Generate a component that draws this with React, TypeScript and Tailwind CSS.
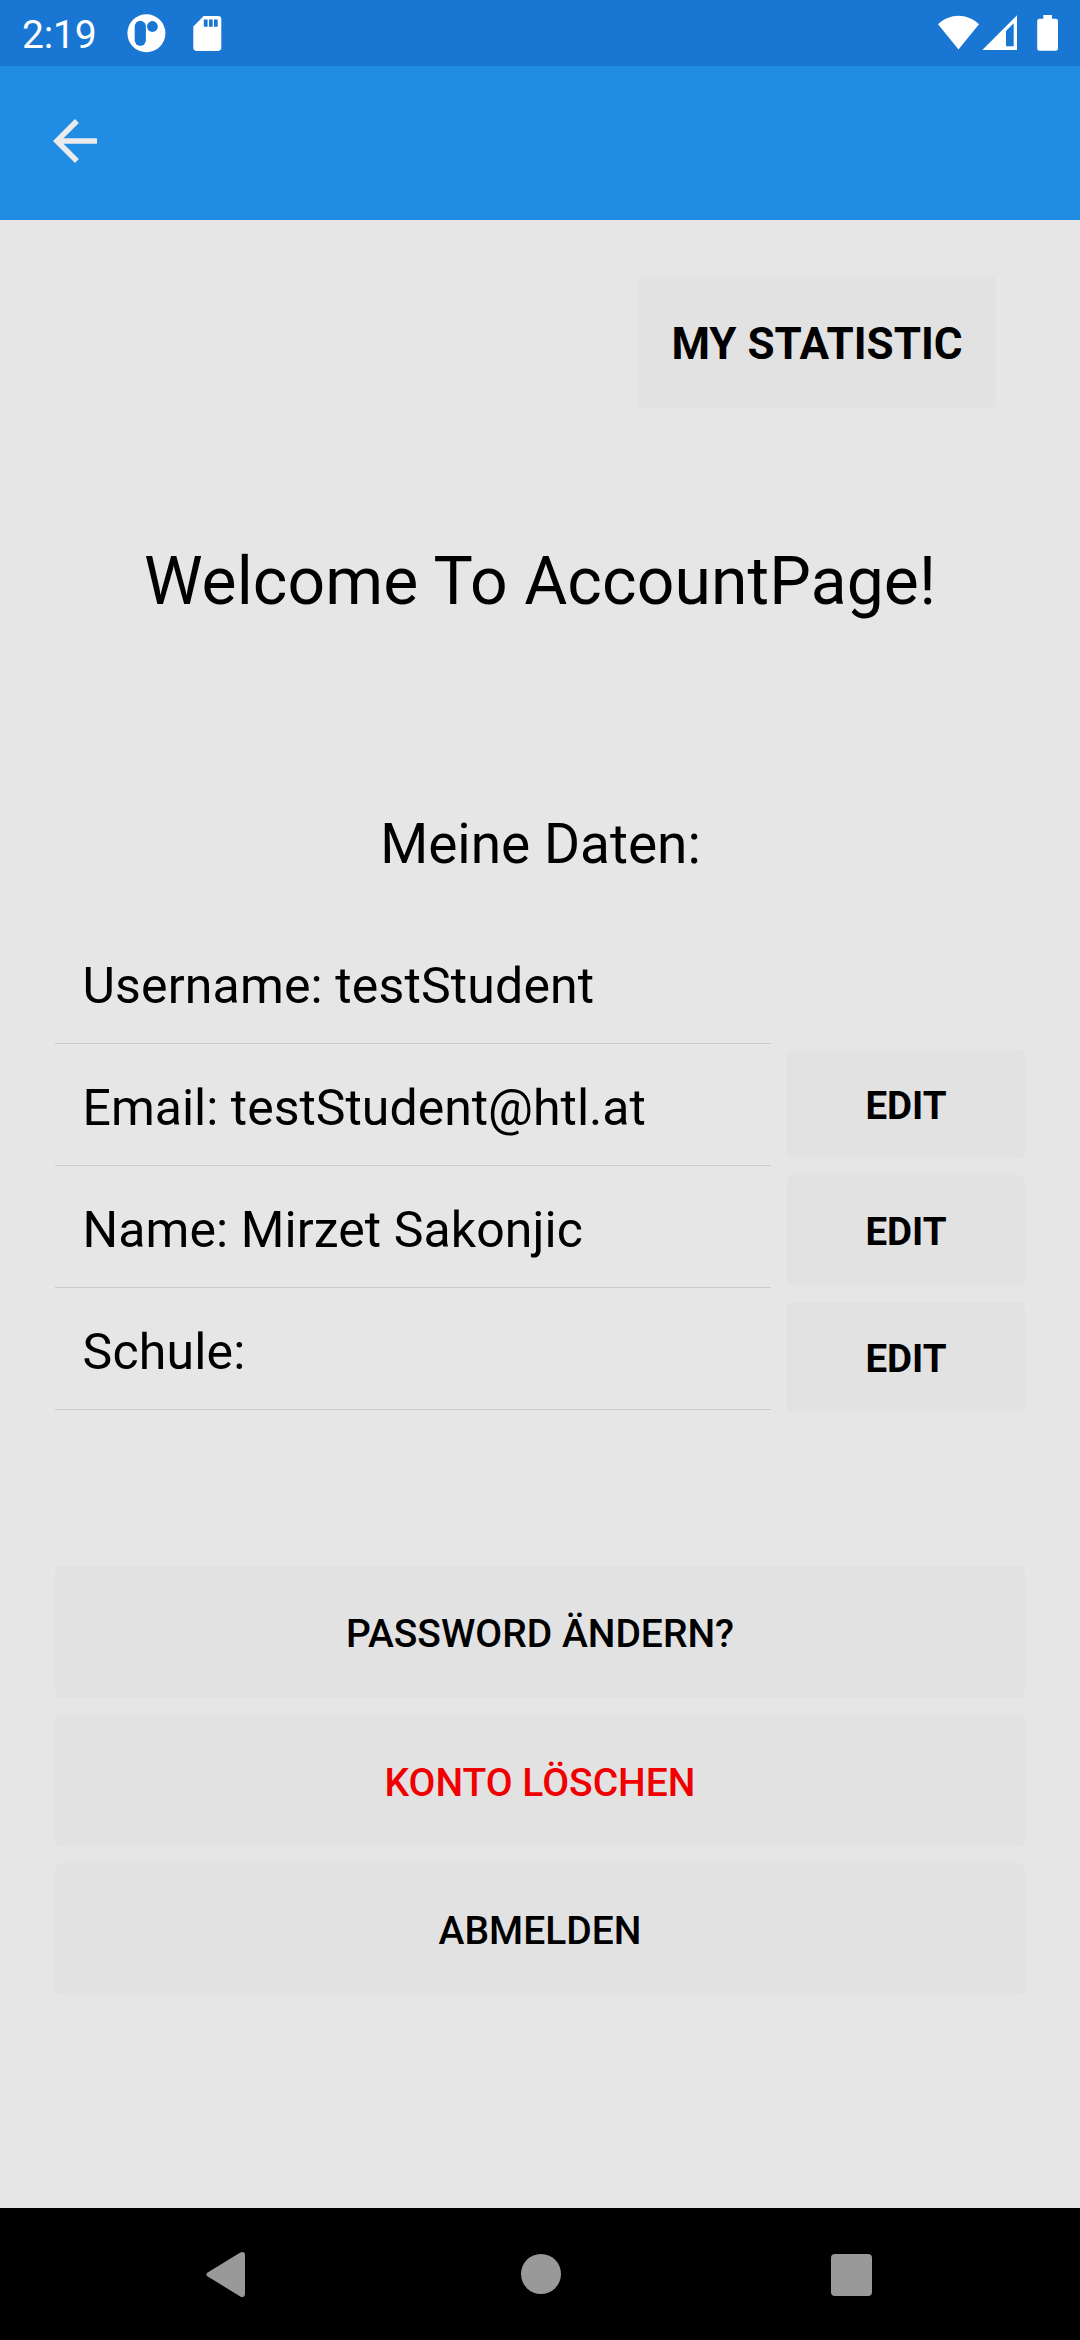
import type { ReactNode } from 'react';

function StatusBar() {
  return (
    <header className="flex h-[66px] items-start justify-between bg-[#1976d2] text-white">
      <div className="flex items-start">
        <span className="ml-[22px] mt-[11px] w-[105px] text-[39px] leading-[48px] tracking-[-0.2px]">2:19</span>
        <svg className="mt-[14px]" width="40" height="40" viewBox="127 14 40 40">
          <circle cx="146.4" cy="33.3" r="19" fill="white" />
          <rect x="134.7" y="20.8" width="11.2" height="25" rx="5.6" fill="#1976d2" />
          <circle cx="152.4" cy="26.5" r="5.4" fill="#1976d2" />
        </svg>
        <svg className="ml-[25px] mt-[14px]" width="30" height="40" viewBox="192 14 30 40">
          <path
            fill="white"
            d="M203.7 16H218a3.3 3.3 0 0 1 3.3 3.3V47.6a3.3 3.3 0 0 1-3.3 3.3H196.6a3.3 3.3 0 0 1-3.3-3.3V26.4Z"
          />
          <path fill="#1976d2" d="M203.8 19.5h3.8v7.2h-3.8zM209 19.5h3.7v7.2H209zM214 19.5h3.7v7.2H214z" />
        </svg>
      </div>
      <svg className="mr-[20px] mt-[14px]" width="124" height="40" viewBox="936 14 124 40">
        <path fill="white" d="M938 24.3C950 12.9 967 12.9 979 24.3L958.5 49.5Z" />
        <path fill="white" fillRule="evenodd" d="M982.3 50H1017V15.3ZM1006 46.3V31L1013.7 23.3V46.3Z" />
        <path
          fill="white"
          d="M1043.3 15h8.7v3.7h3.7a2.3 2.3 0 0 1 2.3 2.3v27.5a2.3 2.3 0 0 1-2.3 2.3h-16.2a2.3 2.3 0 0 1-2.3-2.3V21a2.3 2.3 0 0 1 2.3-2.3h3.8z"
        />
      </svg>
    </header>
  );
}

function Toolbar() {
  return (
    <div className="flex h-[154px] items-start bg-[#208ce3]">
      <button aria-label="Zurück" className="ml-[42px] mt-[42px]">
        <svg width="66" height="66" viewBox="0 0 24 24" fill="#ebebeb">
          <path d="M20 11H7.83l5.59-5.59L12 4l-8 8 8 8 1.41-1.41L7.83 13H20v-2z" />
        </svg>
      </button>
    </div>
  );
}

function ActionButton({ className, children }: { className: string; children: ReactNode }) {
  return (
    <button className={`flex items-center justify-center rounded-[6px] bg-[#e2e2e2] pt-1 ${className}`}>
      {children}
    </button>
  );
}

const rows = [
  { text: 'Username: testStudent', tracking: 'tracking-[0.15px]' },
  { text: 'Email: testStudent@htl.at', tracking: 'tracking-[0px]' },
  { text: 'Name: Mirzet Sakonjic', tracking: 'tracking-[0.08px]' },
  { text: 'Schule:', tracking: 'tracking-[0.2px]' },
];

function NavigationBar() {
  return (
    <nav className="flex h-[132px] items-start justify-between bg-black pl-[205px] pr-[208px] pt-[43px]">
      <svg width="42" height="48" viewBox="205 2251 42 48">
        <path
          fill="#999"
          d="M207.7 2272.4L240.3 2252.6Q245 2250.7 245 2255.5V2293.5Q245 2298.3 240.3 2296.4L207.7 2276.6Q205 2274.5 207.7 2272.4Z"
        />
      </svg>
      <span className="ml-1 mt-[3px] size-10 rounded-full bg-[#999]" />
      <span className="mt-[3px] size-[41.5px] rounded-[4px] bg-[#999]" />
    </nav>
  );
}

export default function App() {
  return (
    <div className="flex h-[2340px] w-[1080px] flex-col overflow-hidden bg-[#e6e6e6] font-['Roboto',sans-serif] text-black">
      <StatusBar />
      <Toolbar />
      <main className="flex flex-1 flex-col px-[55px] pt-14">
        <ActionButton className="mr-[29px] h-[132px] w-[358px] self-end text-[44px] font-bold">
          MY STATISTIC
        </ActionButton>
        <h1 className="mt-[135px] text-center text-[66px] leading-[78px] tracking-[0.12px]">
          Welcome To AccountPage!
        </h1>
        <h2 className="mt-[190px] text-center text-[55px] leading-[66px]">
          <span className="ml-px">Meine Daten:</span>
        </h2>
        <section className="mt-[45px] flex justify-between">
          <ul className="w-[716px]">
            {rows.map((row) => (
              <li
                key={row.text}
                className={`flex h-[122px] items-center border-b border-[#cccccc] pl-[27.5px] pt-[7px] text-[50px] leading-[58px] ${row.tracking}`}
              >
                {row.text}
              </li>
            ))}
          </ul>
          <div className="flex w-[238px] flex-col gap-4 pt-[127px] text-[38.5px] font-bold">
            <ActionButton className="h-[110px]">EDIT</ActionButton>
            <ActionButton className="h-[110px]">EDIT</ActionButton>
            <ActionButton className="mt-px h-[110px]">EDIT</ActionButton>
          </div>
        </section>
        <section className="mt-[154px] flex flex-col gap-4 text-[39px] font-medium">
          <ActionButton className="h-[132px]">PASSWORD ÄNDERN?</ActionButton>
          <ActionButton className="mt-px h-[132px] text-[#f00000]">KONTO LÖSCHEN</ActionButton>
          <ActionButton className="h-[132px]">ABMELDEN</ActionButton>
        </section>
      </main>
      <NavigationBar />
    </div>
  );
}
